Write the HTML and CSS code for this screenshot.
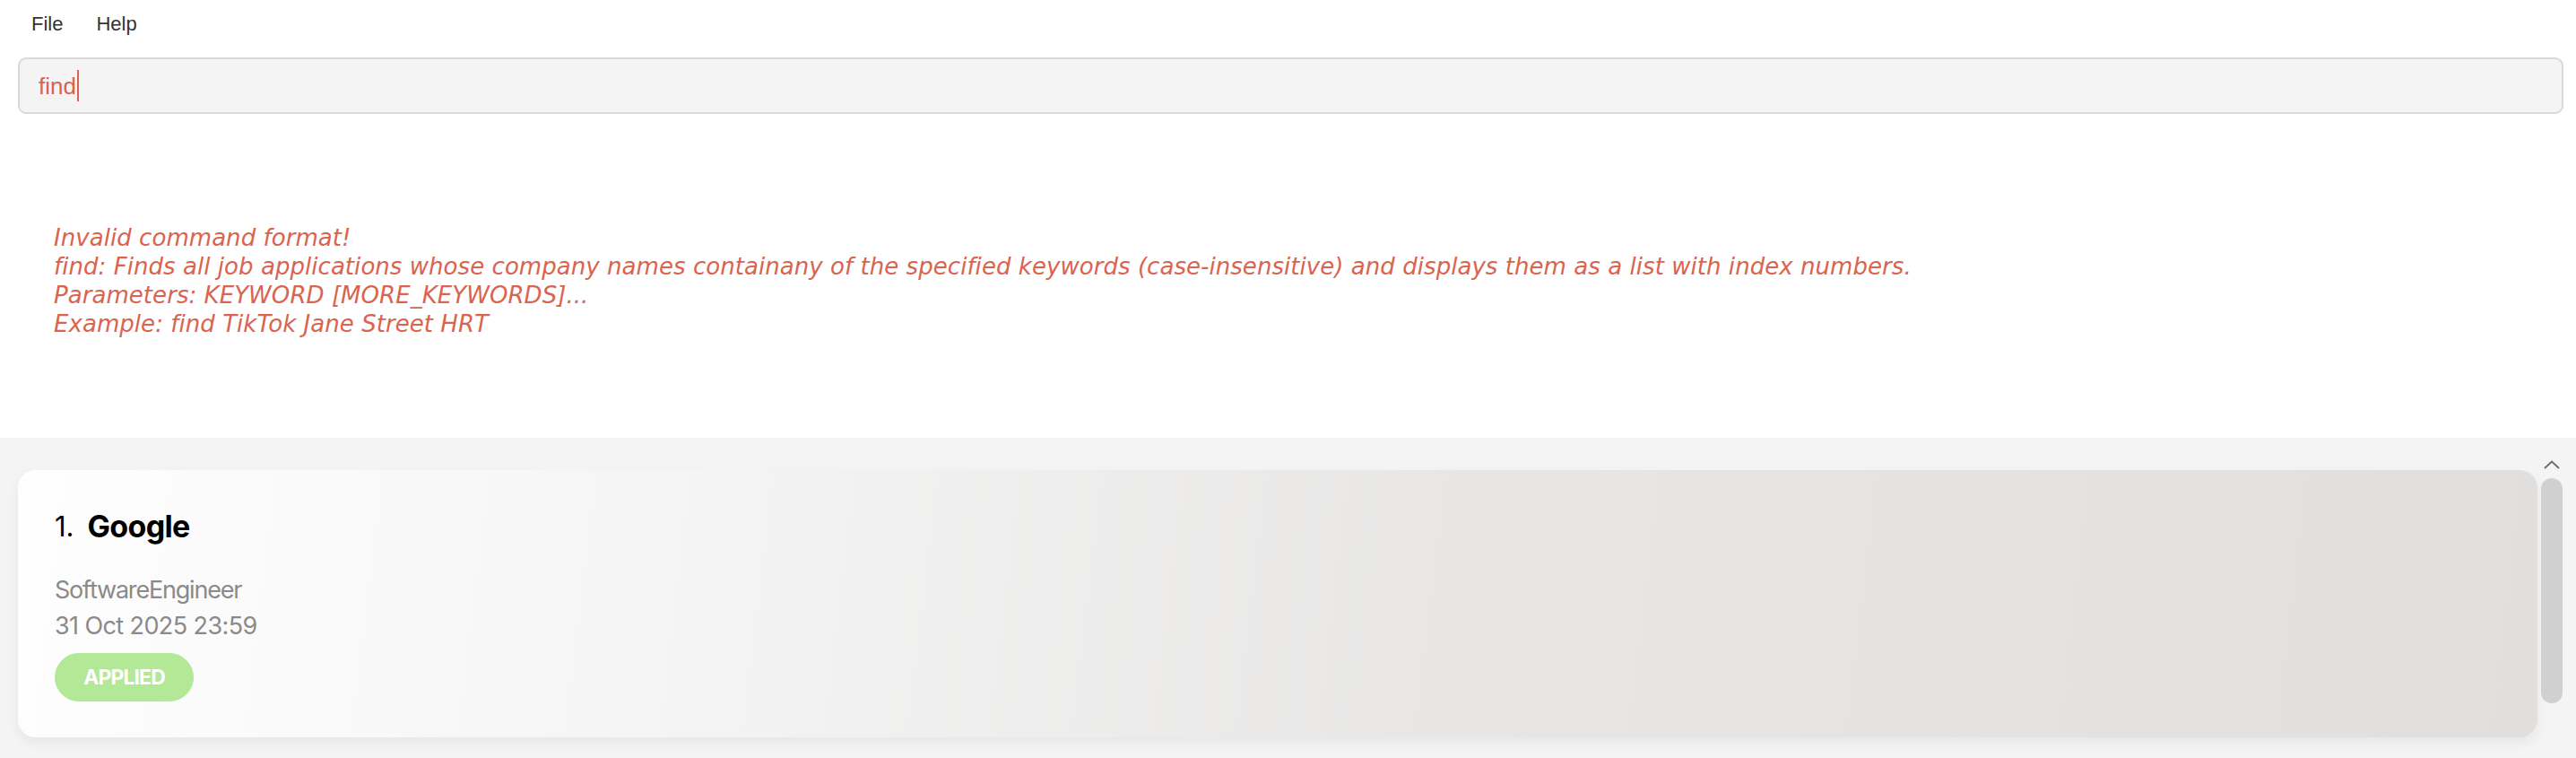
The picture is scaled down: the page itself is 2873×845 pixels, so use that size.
FILE: index.html
```html
<!DOCTYPE html>
<html>
<head>
<meta charset="utf-8">
<link rel="stylesheet" href="styles.css">
</head>
<body>
<div class="app">
  <div class="menubar">
    <span class="menu-item">File</span>
    <span class="menu-item">Help</span>
  </div>
  <div class="command-wrap">
    <div class="command-box"><span class="command-text">find</span><span class="caret"></span></div>
  </div>
  <div class="result">
    <div class="result-line">Invalid command format!</div>
    <div class="result-line">find: Finds all job applications whose company names containany of the specified keywords (case-insensitive) and displays them as a list with index numbers.</div>
    <div class="result-line">Parameters: KEYWORD [MORE_KEYWORDS]...</div>
    <div class="result-line">Example: find TikTok Jane Street HRT</div>
  </div>
  <div class="list-panel">
    <div class="list">
      <div class="card">
        <div class="title"><span class="index">1.</span><span class="company">Google</span></div>
        <div class="role">SoftwareEngineer</div>
        <div class="deadline">31 Oct 2025 23:59</div>
        <div class="badge">APPLIED</div>
      </div>
    </div>
    <div class="scroll">
      <svg class="scroll-arrow" width="18" height="10" viewBox="0 0 18 10"><path d="M1 9 L9 1.5 L17 9" fill="none" stroke="#6e6e6e" stroke-width="2"/></svg>
      <div class="scroll-thumb"></div>
    </div>
  </div>
</div>
</body>
</html>
```

FILE: styles.css
```css
html, body {
  margin: 0;
  padding: 0;
  background: #ffffff;
}
.app {
  width: 2873px;
  height: 845px;
  display: flex;
  flex-direction: column;
  overflow: hidden;
}
.menubar {
  height: 64px;
  display: flex;
  align-items: flex-start;
  padding-left: 35px;
  gap: 37px;
  box-sizing: border-box;
  padding-top: 12px;
}
.menu-item {
  font-family: "Liberation Sans", Arial, sans-serif;
  font-size: 22px;
  line-height: 30px;
  color: #333333;
}
.command-wrap {
  padding: 0 14px 0 20px;
}
.command-box {
  height: 63px;
  box-sizing: border-box;
  border: 2px solid #d9d9d9;
  border-radius: 9px;
  background: #f4f4f4;
  display: flex;
  align-items: center;
  padding-left: 21px;
}
.command-text {
  font-family: "Liberation Sans", Arial, sans-serif;
  font-size: 26px;
  color: #d8634e;
  line-height: 30px;
}
.caret {
  width: 2px;
  height: 35px;
  background: #d8634e;
  margin-left: 1px;
}
.result {
  height: 361px;
  box-sizing: border-box;
  padding: 122px 0 0 60px;
}
.result-line {
  font-family: "DejaVu Sans", Verdana, sans-serif;
  font-style: italic;
  font-size: 26px;
  line-height: 32px;
  letter-spacing: 0.05px;
  color: #d9644f;
  white-space: nowrap;
}
.list-panel {
  flex: 1;
  background: #f4f4f4;
  display: flex;
}
.list {
  flex: 1;
  padding: 36px 0 0 20px;
}
.card {
  height: 298px;
  box-sizing: border-box;
  border-radius: 20px;
  padding: 43px 41px 0 41px;
  background: linear-gradient(97deg, #fefefe 0%, #f5f5f5 25%, #e8e7e6 55%, #e0dfde 100%);
  box-shadow: 0 6px 14px rgba(0, 0, 0, 0.06);
  font-family: Inter, "Noto Sans", sans-serif;
}
.title {
  font-size: 33px;
  line-height: 40px;
  color: #000000;
  display: flex;
  gap: 15px;
}
.index {
  font-size: 31px;
}
.company {
  font-weight: 700;
  font-size: 34px;
  letter-spacing: -0.7px;
}
.role {
  margin-top: 31px;
  font-size: 27px;
  line-height: 40px;
  color: #8a8a8a;
  letter-spacing: -1.2px;
}
.deadline {
  font-size: 27px;
  line-height: 40px;
  color: #8a8a8a;
  letter-spacing: -0.6px;
}
.badge {
  margin-top: 10px;
  width: 155px;
  height: 54px;
  border-radius: 27px;
  background: #b3e897;
  color: #ffffff;
  font-weight: 700;
  font-size: 23px;
  letter-spacing: -0.9px;
  display: flex;
  align-items: center;
  justify-content: center;
}
.scroll {
  width: 43px;
  display: flex;
  flex-direction: column;
  align-items: flex-start;
  padding-left: 4px;
  box-sizing: border-box;
}
.scroll-arrow {
  margin-top: 25px;
  margin-left: 3px;
  display: block;
}
.scroll-thumb {
  margin-top: 10px;
  width: 24px;
  height: 251px;
  border-radius: 12px;
  background: #d0d0d0;
}
```
